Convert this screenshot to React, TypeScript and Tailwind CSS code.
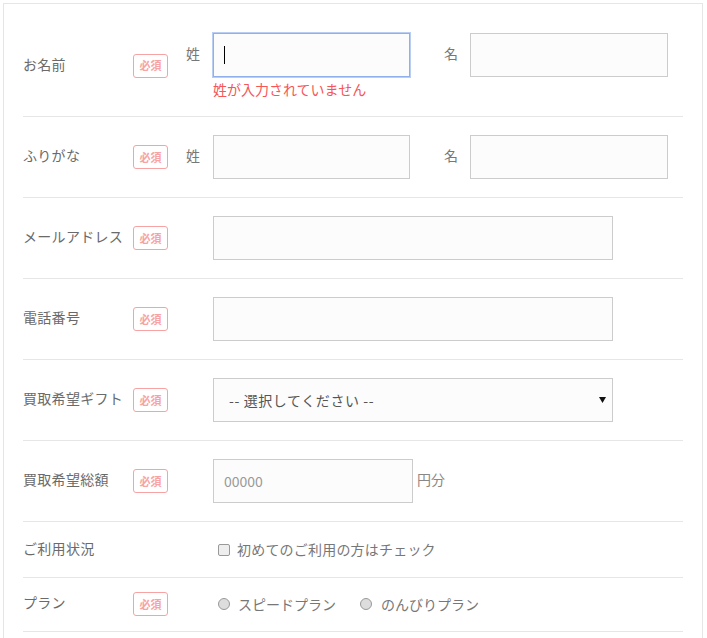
import React from 'react';

const font = { fontFamily: '"Noto Sans CJK JP", "Noto Sans", sans-serif' };

const Badge: React.FC = () => (
    <span className="w-[35px] h-[24px] shrink-0 rounded-[3px] border border-[#f7a3a3] text-[#f7a3a3] text-[11px] font-bold flex items-center justify-center">
        必須
    </span>
);

const Field: React.FC<{ w: string; children?: React.ReactNode; focused?: boolean }> = ({ w, children, focused }) => (
    <div
        className={`${w} h-[44px] bg-[#fcfcfc] flex items-center px-[10px] text-[14px] ${
            focused ? 'border border-[#8fb0ec] shadow-[0_0_0_1px_#b9cef3]' : 'border border-[#cccccc]'
        }`}
    >
        {children}
    </div>
);

const Row: React.FC<{ label: string; required?: boolean; pad?: string; children: React.ReactNode }> = ({
    label,
    required = true,
    pad = 'py-[18px]',
    children,
}) => (
    <div className={`flex items-center border-b border-[#e6e6e6] ${pad}`}>
        <div className="w-[110px] shrink-0 text-[14px] leading-[20px] text-[#6a6a6a] tracking-[0.3px] -mt-[4px]">{label}</div>
        <div className="w-[35px] shrink-0">{required && <Badge />}</div>
        <div className="ml-[18px] flex-1">{children}</div>
    </div>
);

const App: React.FC = () => {
    return (
        <div className="p-[3px] bg-white min-h-[638px]" style={font}>
            <div className="w-[700px] border border-[#e6e6e6] pt-[11px] px-[19px] pb-[6px]">
                {/* お名前 */}
                <Row label="お名前">
                    <div className="flex items-start">
                        <div>
                            <div className="flex items-center">
                                <span className="w-[27px] text-[14px] text-[#777] -mt-[4px]">姓</span>
                                <Field w="w-[197px]" focused>
                                    <span className="w-px h-[18px] bg-black" />
                                </Field>
                            </div>
                            <p className="ml-[27px] mt-[3px] leading-[18px] text-[14px] text-[#f55656]">姓が入力されていません</p>
                        </div>
                        <div className="flex items-center ml-[34px]">
                            <span className="w-[26px] text-[14px] text-[#777] -mt-[4px]">名</span>
                            <Field w="w-[198px]" />
                        </div>
                    </div>
                </Row>

                {/* ふりがな */}
                <Row label="ふりがな">
                    <div className="flex items-center">
                        <span className="w-[27px] text-[14px] text-[#777] -mt-[4px]">姓</span>
                        <Field w="w-[197px]" />
                        <span className="ml-[34px] w-[26px] text-[14px] text-[#777] -mt-[4px]">名</span>
                        <Field w="w-[198px]" />
                    </div>
                </Row>

                <Row label="メールアドレス">
                    <div className="pl-[27px]">
                        <Field w="w-[400px]" />
                    </div>
                </Row>

                <Row label="電話番号">
                    <div className="pl-[27px]">
                        <Field w="w-[400px]" />
                    </div>
                </Row>

                <Row label="買取希望ギフト">
                    <div className="pl-[27px]">
                        <div className="w-[400px] h-[44px] bg-[#fcfcfc] border border-[#cccccc] flex items-center justify-between pl-[15px] pr-[6px]">
                            <span className="text-[14px] text-[#555] tracking-[0.6px]">-- 選択してください --</span>
                            <svg width="7" height="6" viewBox="0 0 7 6">
                                <path d="M0 0h7L3.5 6z" fill="#111" />
                            </svg>
                        </div>
                    </div>
                </Row>

                <Row label="買取希望総額">
                    <div className="pl-[27px] flex items-center">
                        <Field w="w-[200px]">
                            <span className="text-[#999]">00000</span>
                        </Field>
                        <span className="ml-[4px] text-[14px] text-[#888] -mt-[4px]">円分</span>
                    </div>
                </Row>

                <Row label="ご利用状況" required={false}>
                    <div className="pl-[32px] flex items-center h-[19px] leading-[19px]">
                        <span className="w-[12px] h-[12px] border border-[#999] bg-[#eee] rounded-[2px]" />
                        <span className="ml-[7px] text-[14px] text-[#777] tracking-[0.2px]">初めてのご利用の方はチェック</span>
                    </div>
                </Row>

                <Row label="プラン" pad="pt-[14px] pb-[15px]">
                    <div className="pl-[32px] flex items-center text-[14px] text-[#777] h-[24px] leading-[19px]">
                        <span className="w-[12px] h-[12px] rounded-full border border-[#999] bg-[#ddd]" />
                        <span className="ml-[8px]">スピードプラン</span>
                        <span className="ml-[24px] w-[12px] h-[12px] rounded-full border border-[#999] bg-[#ddd]" />
                        <span className="ml-[9px]">のんびりプラン</span>
                    </div>
                </Row>
            </div>
        </div>
    );
};

export default App;
